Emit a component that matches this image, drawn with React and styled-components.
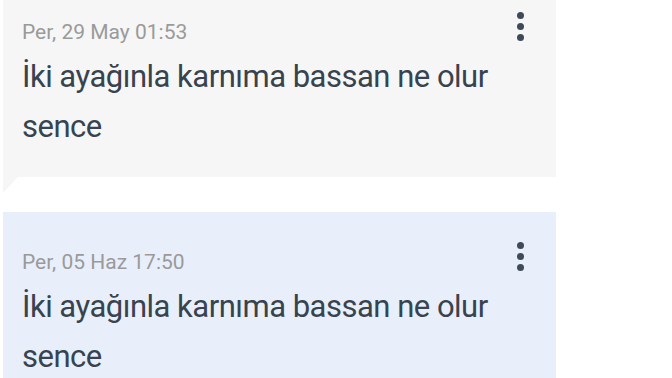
import React from "react";
import styled, { createGlobalStyle } from "styled-components";

const GlobalStyle = createGlobalStyle`
  html, body {
    margin: 0;
    padding: 0;
    background: #ffffff;
    overflow: hidden;
  }
  body {
    font-family: Roboto, "Noto Sans", "Liberation Sans", sans-serif;
  }
`;

const Thread = styled.div`
  display: flex;
  flex-direction: column;
  gap: 35px;
  width: 553px;
  margin-top: -18px;
  padding-left: 3px;
`;

const Bubble = styled.div`
  position: relative;
  background: ${(p) => (p.$mine ? "#e8effa" : "#f6f6f6")};
  padding: 38px 0 25px 19px;

  &::after {
    content: "";
    display: ${(p) => (p.$tail ? "block" : "none")};
    position: absolute;
    top: 100%;
    left: 0;
    width: 15px;
    height: 16px;
    background: inherit;
    clip-path: polygon(0 0, 100% 0, 0 100%);
  }
`;

const Header = styled.div`
  display: flex;
  align-items: center;
  justify-content: space-between;
`;

const Stamp = styled.div`
  font-size: 21px;
  line-height: 24px;
  color: #9a9a9a;
`;

const MenuButton = styled.button`
  display: flex;
  flex-direction: column;
  align-items: center;
  gap: 4px;
  width: 24px;
  margin: -12px 24px 0 0;
  padding: 0;
  border: 0;
  background: none;
  cursor: pointer;
`;

const Dot = styled.span`
  width: 7px;
  height: 7px;
  border-radius: 50%;
  background: #3e4a57;
`;

const Message = styled.div`
  margin-top: 8px;
  font-size: 31px;
  letter-spacing: -0.5px;
  line-height: 50px;
  color: #37434f;
  width: 510px;
`;

const messages = [
  { id: 1, stamp: "Per, 29 May 01:53", text: "İki ayağınla karnıma bassan ne olur sence", mine: false },
  { id: 2, stamp: "Per, 05 Haz 17:50", text: "İki ayağınla karnıma bassan ne olur sence", mine: true },
];

function App() {
  return (
    <>
      <GlobalStyle />
      <Thread>
        {messages.map((m) => (
          <Bubble key={m.id} $mine={m.mine} $tail={!m.mine}>
            <Header>
              <Stamp>{m.stamp}</Stamp>
              <MenuButton aria-label="menu">
                <Dot />
                <Dot />
                <Dot />
              </MenuButton>
            </Header>
            <Message>{m.text}</Message>
          </Bubble>
        ))}
      </Thread>
    </>
  );
}

export default App;
